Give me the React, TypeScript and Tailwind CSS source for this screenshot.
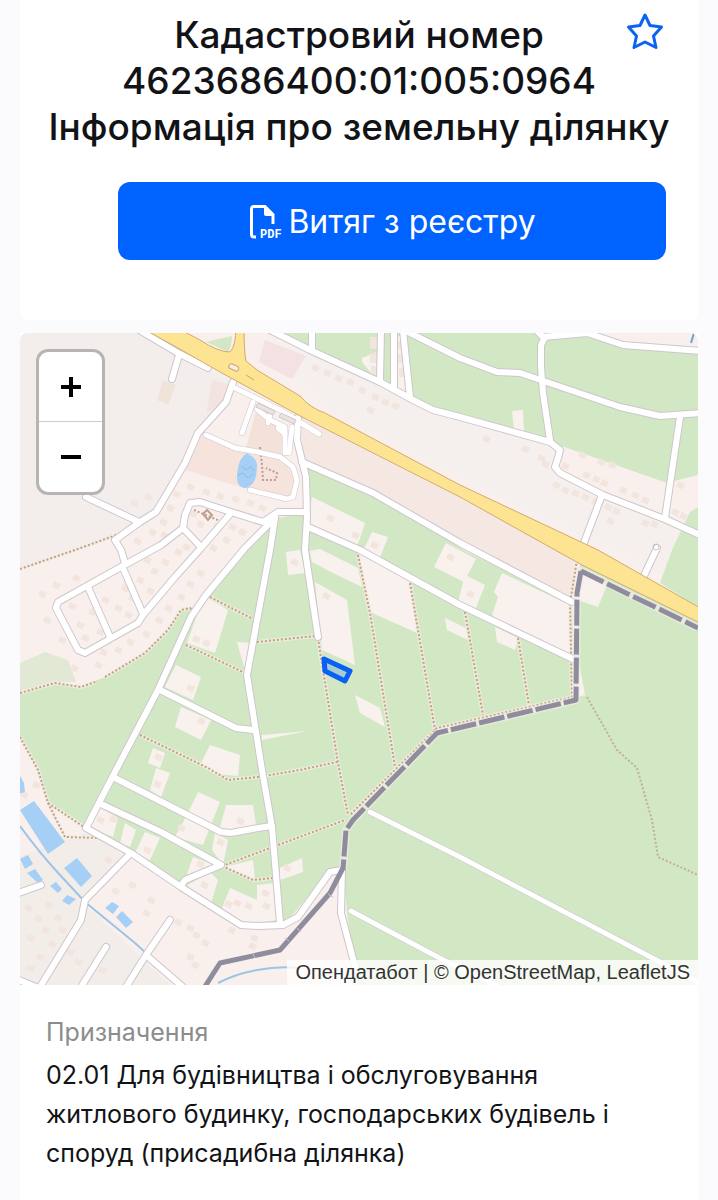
import { useState } from 'react';

// Map geometry is kept in one drawing space, north up.
const VIEW_BOX = '20 333 678 652';

const GREENS = [
  '268,333 540,333 587,333 623,345 698,350 698,475 667,483 550,442 460,417 413,400 310,350',
  '698,507 690,512 672,550 660,583 698,607',
  '580,563 698,622 698,985 357,985 347,913 343,870 345,823 437,735 576,700 578,600',
  '270,520 307,512 303,464 373,493 467,552 572,603 576,700 437,735 348,820 343,870 330,870 284,925 241,925 88,828 116,770 206,595 245,550',
  '193,612 158,690 116,770 86,827 48,803 38,770 20,737 20,693 55,683 81,687 105,677 145,653 168,630 181,610 190,608',
];

const PLOTS = [
  '312,497 365,523 357,547 308,523', '372,532 388,537 380,557 362,553',
  '286,552 300,550 305,573 288,575', '310,551 320,549 358,568 362,587 333,573 312,562',
  '315,582 347,600 355,665 322,650', '358,552 410,580 417,633 370,612',
  '355,695 380,708 385,727 360,713', '434,567 446,543 476,559 464,582',
  '445,618 466,628 468,640 447,630', '465,575 485,585 475,610 458,602',
  '502,573 570,605 573,660 498,620 492,615 498,597 494,592', '495,627 518,638 515,650 497,642',
  '262,735 307,731 262,740', '237,642 253,643 245,670',
  '208,598 228,610 220,637 215,653 187,643 197,615', '176,665 201,677 193,700 165,687',
  '181,707 211,720 201,740 175,727', '210,745 240,755 238,776 216,774 200,765',
  '153,748 165,753 160,768 148,763', '156,768 170,773 161,797 150,790',
  '198,792 220,802 203,845 175,837 188,813', '226,805 253,805 256,825 231,832 220,827',
  '100,807 118,818 113,837 90,828', '125,823 136,830 130,847 120,843',
  '145,832 160,838 150,860 135,853', '215,833 228,840 223,865 212,850',
  '193,857 214,865 185,880', '188,885 210,872 218,880 210,907 185,890',
  '280,868 302,858 303,872 280,880', '225,867 253,860 255,880',
  '257,885 275,883 278,920 240,925 222,908 230,888 257,900',
  '580,573 607,585 598,607 578,600', '512,411 523,410 524,433 514,429', '579,662 585,695 577,697',
  '362,358 372,354 376,352 379,378 372,374 362,362', '397,336 402,336 407,393 397,388',
];

const ROADS = [
  '136,328 178,353 208,368', '179,355 172,379',
  '233,382 226,402 198,433 185,463 156,512 140,522 115,540 121,550 125,563', '86,497 139,522',
  '305,512 278,512 263,522 231,512 200,502 190,503 185,515 183,528 161,545 121,567 58,602 56,608 78,650 85,653 138,623 143,615 175,577 201,548 231,513',
  '183,528 200,546', '88,587 110,637', '123,568 143,614',
  '275,518 245,548 206,595 191,617 158,690 116,770 86,828 131,853 181,887 241,925 258,926 283,925 298,917 330,872 342,870',
  '275,518 270,550 247,675 262,770 272,827 280,923',
  '298,418 297,440 306,477 307,517 305,550 318,637',
  '302,462 373,493 460,543 572,602', '308,527 360,550 460,605 575,660',
  '160,690 236,728 253,730', '115,778 221,832 231,833 258,828 272,826',
  '103,805 161,832 221,865 185,880 181,886',
  '128,856 85,900 81,920 40,987', '106,947 81,987', '170,920 146,955 141,963 126,987',
  '147,956 183,987', '16,894 41,885', '16,979 36,987',
  '268,329 310,350 380,382 413,400 433,410 460,417 550,442 560,450 558,458 555,467 560,473 603,495 667,520 700,535',
  '312,330 312,350', '381,330 380,381', '394,330 394,386', '403,330 405,350 410,397',
  '402,329 460,358 497,372 520,373 620,407 660,416 700,413',
  '536,330 543,337 587,333 623,345 700,351', '545,337 541,345 541,367 543,393 550,440',
  '680,417 665,518', '602,495 582,548', '657,548 642,580',
  '342,870 341,913 356,970',
];

const MINOR_ROADS = [
  '370,812 460,857 660,962 700,983', '351,911 447,962 500,987',
  '206,435 235,448 258,452 280,457 293,467 297,480 293,497 287,499 250,490',
  '233,387 280,410 319,434', '253,402 242,433', '257,409 270,420 285,427 285,453',
  '292,427 289,453', '270,415 268,423', '285,434 278,428',
];

const PATHS = [
  '20,569 75,550 130,530', '20,693 55,683 81,687 95,682', '105,677 145,653 168,630 181,610 190,608 195,612',
  '20,737 38,770 48,803 65,837 98,838 125,850', '48,803 84,827', '210,597 251,618', '186,645 245,673',
  '140,735 208,768 228,780 258,777 300,770 337,762', '222,866 345,820', '222,866 253,880 273,878',
  '257,642 315,636', '318,638 323,670 338,763 348,815', '358,555 370,613 395,767', '410,583 435,730',
  '465,612 483,715', '518,638 529,705', '577,560 570,603 572,697 460,723 437,728 350,815',
];

const POOLS = [
  '20,810 34,801 65,842 48,854', '64,868 77,858 92,876 81,887', '20,859 28,855 33,864 25,869',
  '27,873 35,869 43,880 38,883', '50,886 56,882 62,889 58,893', '62,901 67,895 76,899 69,905',
  '105,908 112,902 119,906 113,914', '116,917 122,911 133,922 126,928', '18,772 24,783 25,792 18,794',
];

const HOUSES: [number, number][] = [
  [42, 594], [56, 585], [76, 578], [47, 620], [72, 606], [92, 612], [80, 625], [105, 600], [62, 640], [85, 638],
  [100, 632], [125, 588], [132, 598], [140, 580], [150, 591], [154, 571], [118, 608], [128, 615], [103, 652],
  [118, 650], [130, 642], [146, 634], [159, 620], [168, 608], [181, 597], [190, 584], [200, 573], [74, 668],
  [98, 665], [127, 581], [147, 560], [165, 562], [178, 552], [186, 547], [134, 503], [148, 497], [170, 508],
  [176, 494], [190, 487], [206, 492], [220, 496], [235, 499], [250, 503], [262, 508], [163, 522], [152, 532],
  [137, 541], [164, 535], [200, 524], [193, 514], [217, 526], [232, 527], [242, 532], [226, 540], [213, 548],
  [545, 464], [556, 485], [565, 490], [575, 493], [585, 497], [595, 502], [608, 507], [616, 511], [586, 475],
  [596, 479], [604, 483], [623, 490], [635, 495], [645, 500], [680, 485], [675, 512], [683, 516], [645, 523],
  [654, 524], [610, 521], [565, 466], [582, 455], [601, 462], [612, 465], [525, 449], [541, 458], [486, 439],
  [315, 368], [327, 373], [338, 378], [350, 382], [362, 390], [375, 397], [385, 402], [395, 406], [370, 410],
  [330, 518], [355, 535], [374, 545], [294, 562], [326, 596], [190, 688], [201, 721], [196, 639], [206, 643],
  [158, 757], [157, 784], [181, 828], [240, 821], [220, 842], [147, 850], [287, 868], [200, 864], [204, 885],
  [228, 904], [237, 903], [248, 906], [265, 893], [266, 906], [254, 938], [252, 946], [231, 930], [132, 885],
  [115, 891], [151, 900], [146, 913], [178, 922], [190, 928], [196, 935], [205, 943], [190, 957], [195, 965],
  [28, 908], [38, 918], [48, 905], [58, 918], [45, 930], [30, 938], [62, 930], [52, 944], [40, 957], [70, 952],
  [78, 962], [30, 968], [102, 970], [450, 557], [470, 594], [108, 860], [100, 820], [113, 819], [24, 795], [36, 785],
];

const HIGHWAY =
  'M140 327 181 330 200 340 Q218 352 230 352 Q236 346 236 327 L244 327 Q244 352 246 361 L257 370 300 396 Q310 408 325 413 L460 485 598 550 702 609 702 624 582 565 460 497 302 417 220 372 178 348Z';

const PARCEL = '324,659 350,671 345,681 325,671';

function ParcelMap() {
  return (
    <svg viewBox={VIEW_BOX} className="block h-auto w-full" role="img" aria-label="Карта земельної ділянки">
      <rect x="20" y="333" width="678" height="652" fill="#f9f0ed" />
      <polygon points="20,333 145,333 233,382 198,433 156,512 110,540 20,568" fill="#f3eeec" />
      <polygon points="250,340 310,352 413,402 550,445 555,470 698,535 698,590 590,540 460,478 330,410" fill="#f5f0ed" />
      <polygon points="265,340 306,356 292,379 259,362" fill="#f4e1e1" />
      <polygon points="20,856 86,833 128,857 85,905 170,985 20,985" fill="#f3ede9" />
      <polygon points="302,418 460,498 578,562 571,602 460,540 302,460" fill="#f5e8e2" />
      <polygon points="204,431 235,446 280,456 296,478 290,498 240,487 186,470" fill="#f5e3dc" />
      <polygon points="256,411 284,428 282,454 246,448" fill="#f3e1da" />
      <polygon points="212,380 228,384 222,404 206,414" fill="#f4e4e1" />
      <polygon points="163,380 176,385 168,405 157,400" fill="#f0e4da" />

      <g fill="#d2e8c5">
        {GREENS.map((points) => <polygon key={points} points={points} />)}
        <path d="M206 342 Q222 338 232 336 Q232 346 228 352Z" />
      </g>
      <polygon points="20,663 45,652 68,660 76,682 55,682 20,692" fill="#e1e9d4" />
      <g fill="#f9f1ed">
        {PLOTS.map((points) => <polygon key={points} points={points} />)}
      </g>
      <g fill="#f1e5dd">
        {HOUSES.map(([x, y]) => (
          <rect key={`${x}-${y}`} x={x - 3} y={y - 3} width="7" height="6" transform={`rotate(24 ${x} ${y})`} />
        ))}
        <path d="M370 337h7v12h-7zM370 353h7v10h-7zM371 366h6v10h-6zM398 341h5v8h-5zM398 354h6v9h-6zM399 368h6v9h-6z" />
      </g>

      <g fill="#a6cff5">
        <path d="M247 453 Q256 458 257 464 Q257 480 252 484 Q246 491 240 486 Q235 480 238 468 Q240 457 247 453Z" />
        {POOLS.map((points) => <polygon key={points} points={points} />)}
      </g>
      <path d="m241 466 5 4 4-3 5 4m-17 4 5-2 5 5 6-4" fill="none" stroke="#8dbdec" strokeWidth="1" />
      <g fill="none" stroke="#9bc4e6" strokeWidth="2">
        <path d="M20 826 Q38 851 60 875 L85 902 135 943 182 986" />
        <path d="M218 983 Q235 974 257 970 T298 968" />
        <path d="m694 333-3 10" stroke="#6ba7cf" />
      </g>

      <g fill="none" stroke="#f7ecdf" strokeWidth="4" strokeOpacity="0.75">
        {PATHS.map((points) => <polyline key={points} points={points} />)}
      </g>
      <g fill="none" stroke="#bba28c" strokeWidth="2" strokeDasharray="2 2">
        {PATHS.map((points) => <polyline key={points} points={points} />)}
        <polyline points="587,697 617,750 637,768 652,820 658,857 698,875" strokeOpacity="0.8" />
        <path d="M260 447 262 465 263 480 276 480 277 473 266 468M194 510l26 11" stroke="#c39b8e" />
      </g>
      <path d="m203 514 4-4 5 5-4 5z" fill="none" stroke="#c0a08c" strokeWidth="2" />

      <g fill="none" stroke="#cdc6cd" strokeLinecap="round" strokeLinejoin="round">
        <g strokeWidth="8">
          {ROADS.map((points) => <polyline key={points} points={points} />)}
        </g>
        <g strokeWidth="6">
          {MINOR_ROADS.map((points) => <polyline key={points} points={points} />)}
        </g>
      </g>
      <g fill="none" stroke="#ffffff" strokeLinecap="round" strokeLinejoin="round">
        <g strokeWidth="6">
          {ROADS.map((points) => <polyline key={points} points={points} />)}
        </g>
        <g strokeWidth="5">
          {MINOR_ROADS.map((points) => <polyline key={points} points={points} />)}
        </g>
      </g>
      <path d="m258 403 17 8-2 4-17-8zM281 413l15 7-2 4-15-7z" fill="#ebe3dd" stroke="#cdc6cd" />
      <circle cx="656" cy="547" r="3" fill="none" stroke="#c8c0c8" />

      <path d={HIGHWAY} fill="#fce492" stroke="#d2a96e" strokeWidth="1" />
      <rect x="229" y="365" width="10" height="5" rx="2" transform="rotate(24 234 367)" fill="#f8eee0" stroke="#cfa367" />
      <path d="m246 375 8 5" stroke="#cfa367" />

      <g fill="none" strokeLinejoin="round">
        <path d="M698 628 582 571 577 593 576 700 437 733 353 820 346 830 343 870" stroke="#f3ebe8" strokeWidth="8" strokeOpacity="0.6" />
        <g stroke="#8f8d9d" strokeWidth="5">
          <polyline points="581,571 698,628" strokeDasharray="25 4" />
          <polyline points="581,571 577,593 576,700 437,733 353,820 346,830 343,870" strokeDasharray="26 3" />
          <polyline points="343,868 330,893 280,950 220,963 204,988" />
        </g>
        <path d="m297 928 4 4M328 894l5 3M253 954l2 4M285 938l4 3" stroke="#c5c1cb" />
      </g>

      <polygon points={PARCEL} fill="#0062ff" fillOpacity="0.2" stroke="#0860f4" strokeWidth="5" strokeLinejoin="round" />
    </svg>
  );
}

function StarIcon() {
  return (
    <svg viewBox="0 0 38 38" className="size-[38px]" fill="none" stroke="#0b63f3" strokeWidth="3" strokeLinejoin="round" aria-hidden="true">
      <path d="M19 3 24 13.500 35.500 15 27.500 24 30 35.500 19 30 8 35.500 10.500 24 2.500 15 14 13.500Z" />
    </svg>
  );
}

function PdfIcon() {
  return (
    <svg viewBox="0 0 36 40" className="h-10 w-9 shrink-0 overflow-visible" aria-hidden="true">
      <path d="M8 35H6Q3.500 35 3.500 32V7Q3.500 4.500 6 4.500H17L25 12.500V22" fill="none" stroke="#fff" strokeWidth="3" />
      <path d="M16 4H18L26 12V14H18Q16 14 16 12Z" fill="#fff" />
      <text x="12" y="36" fill="#fff" className="font-['Liberation_Mono',monospace] text-[12px] font-bold">PDF</text>
    </svg>
  );
}

function App() {
  const [saved, setSaved] = useState(false);

  return (
    <div className="min-h-screen bg-[#fbfbfe] px-5 font-['Inter',sans-serif] text-[#121316]">
      <header className="relative rounded-b-lg bg-white px-7 pt-3 pb-[60px]">
        <h1 className="text-center text-[37px] leading-[46px] font-medium">
          Кадастровий номер
          <br />
          4623686400:01:005:0964
          <br />
          Інформація про земельну ділянку
        </h1>
        <button
          type="button"
          aria-label="Додати в обране"
          aria-pressed={saved}
          onClick={() => setSaved(!saved)}
          className="absolute top-3 right-[34px]"
        >
          <StarIcon />
        </button>
        <div className="mt-8 pr-1 pl-[70px]">
          <button
            type="button"
            className="flex h-[78px] w-full items-center justify-center gap-1 rounded-xl bg-[#0062ff] pt-px text-[32px] text-white"
          >
            <PdfIcon />
            Витяг з реєстру
          </button>
        </div>
      </header>

      <main className="mt-[13px] min-h-[867px] bg-white">
        <section className="relative overflow-hidden rounded-t-lg">
          <ParcelMap />
          <div className="absolute top-4 left-4 flex w-[69px] flex-col overflow-hidden rounded-xl border-[3px] border-[#b8b4b3] bg-white">
            <button type="button" aria-label="Збільшити" className="flex h-[70px] items-center justify-center border-b border-[#ccc]">
              <svg viewBox="0 0 20 20" className="size-5" stroke="#000" strokeWidth="4" aria-hidden="true">
                <path d="M0 10H20M10 0V20" />
              </svg>
            </button>
            <button type="button" aria-label="Зменшити" className="flex h-[70px] items-center justify-center">
              <svg viewBox="0 0 20 20" className="size-5" stroke="#000" strokeWidth="4" aria-hidden="true">
                <path d="M0 10H20" />
              </svg>
            </button>
          </div>
          <div className="absolute right-0 bottom-0 bg-white/80 px-2 font-['Liberation_Sans',sans-serif] text-[20px] leading-[25px] text-[#333]">
            <a href="#opendatabot">Опендатабот</a> | © <a href="#osm">OpenStreetMap</a>, <a href="#leaflet">LeafletJS</a>
          </div>
        </section>

        <dl className="px-[26px] pt-7 pb-6 text-[25px] leading-[39px]">
          <dt className="text-[#8b8c8e]">Призначення</dt>
          <dd className="mt-1">
            02.01 Для будівництва і обслуговування житлового будинку, господарських будівель і споруд (присадибна ділянка)
          </dd>
        </dl>
      </main>
    </div>
  );
}

export default App;
